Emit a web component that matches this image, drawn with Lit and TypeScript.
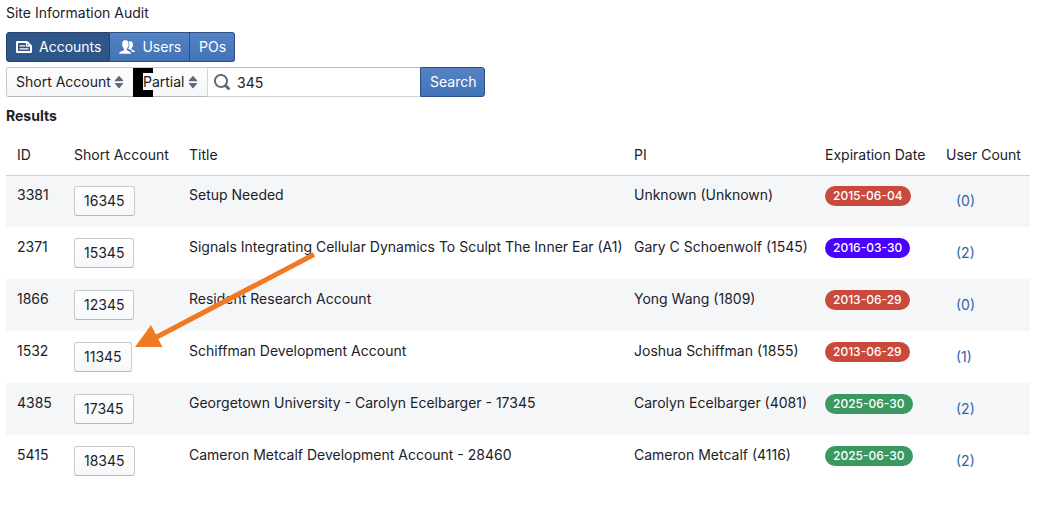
import { LitElement, html, css, svg } from "lit";
import { customElement, state } from "lit/decorators.js";
import { classMap } from "lit/directives/class-map.js";

type Status = "expired" | "closing" | "active";

interface Account {
  id: number;
  short: string;
  title: string;
  pi: string;
  expires: string;
  status: Status;
  users: number;
}

const ACCOUNTS: Account[] = [
  { id: 3381, short: "16345", title: "Setup Needed", pi: "Unknown (Unknown)", expires: "2015-06-04", status: "expired", users: 0 },
  { id: 2371, short: "15345", title: "Signals Integrating Cellular Dynamics To Sculpt The Inner Ear (A1)", pi: "Gary C Schoenwolf (1545)", expires: "2016-03-30", status: "closing", users: 2 },
  { id: 1866, short: "12345", title: "Resident Research Account", pi: "Yong Wang (1809)", expires: "2013-06-29", status: "expired", users: 0 },
  { id: 1532, short: "11345", title: "Schiffman Development Account", pi: "Joshua Schiffman (1855)", expires: "2013-06-29", status: "expired", users: 1 },
  { id: 4385, short: "17345", title: "Georgetown University - Carolyn Ecelbarger - 17345", pi: "Carolyn Ecelbarger (4081)", expires: "2025-06-30", status: "active", users: 2 },
  { id: 5415, short: "18345", title: "Cameron Metcalf Development Account - 28460", pi: "Cameron Metcalf (4116)", expires: "2025-06-30", status: "active", users: 2 },
];

const accountsIcon = svg`<path fill="none" stroke="currentColor" stroke-width="2" stroke-linejoin="round" d="M1 3h10l4 4v6H1z"/><path fill="none" stroke="currentColor" stroke-width="1.300" d="M10.500 3v4H15M3.500 6.800H9M3.500 9.900h9"/>`;
const usersIcon = svg`<path fill="currentColor" d="M15.900 13c-.1-.5-.2-1-.9-1.400-.7-.3-2.300-.8-2.500-1.300s-.1-.9-.1-.9.700-.7.900-1.700c.5-.1.700-.9.700-1.400s-.3-.8-.3-.8c.2-.8.1-1.800-.4-2.400-.5-.6-1.200-.8-2-.8-.6 0-1.200.2-1.700.5.600.9.800 2 .6 3.200.3.600.1 1.700-.4 2.300-.2.500-.4.900-.7 1.200.5.600 2.400 1 3.200 1.700.6.500.7 1.800.7 1.800z"/><path fill="currentColor" d="M12 14.800s-.1-1.500-.9-2c-.7-.5-2.900-1-3.200-1.800-.2-.5-.1-1-.1-1s.9-1 1.100-2.200c.5-.2.800-1 .8-1.500 0-.6-.3-1-.3-1 .2-1.100.1-2.200-.4-2.900-.6-.8-1.500-1.100-2.600-1.100s-2 .3-2.600 1.100c-.5.700-.6 1.800-.4 2.900 0 0-.3.400-.3 1 .1.500.3 1.300.8 1.500.2 1.200 1.100 2.200 1.100 2.200s.1.500-.1 1c-.3.800-2.900 1.300-3.700 1.800-.9.500-1.200 2-1.200 2z"/>`;
const searchIcon = svg`<path fill="currentColor" fill-rule="evenodd" d="M15.550 13.430l-2.670-2.680a6.940 6.940 0 001.110-3.760c0-3.870-3.130-7-7-7s-7 3.130-7 7 3.130 7 7 7c1.390 0 2.680-.42 3.760-1.110l2.680 2.670a1.498 1.498 0 102.120-2.120zm-8.560-1.440c-2.760 0-5-2.240-5-5s2.240-5 5-5 5 2.240 5 5-2.240 5-5 5z"/>`;
const caretIcon = svg`<path fill="currentColor" d="M4.400 7.200h7.200a.5.500 0 00.400-.85l-3.500-4.200a.65.650 0 00-1 0L4 6.350a.5.500 0 00.4.85zM11.600 8.900H4.400a.5.500 0 00-.4.850l3.500 4.200a.65.650 0 001 0l3.500-4.200a.5.500 0 00-.4-.85z"/>`;

const icon = (shape: unknown) =>
  html`<svg class="icon" viewBox="0 0 16 16" aria-hidden="true">${shape}</svg>`;

@customElement("app-root")
export class AppRoot extends LitElement {
  @state() private tab = "Accounts";

  static styles = css`
    :host {
      display: block;
      box-sizing: border-box;
      padding: 4px 24px 24px 6px;
      color: #1c2127;
      font: 14px/18px Inter, sans-serif;
    }
    *,
    *::after {
      box-sizing: border-box;
    }
    h1,
    h2 {
      margin: 0 0 10px;
      font-size: 14px;
      line-height: 18px;
      font-weight: 400;
    }
    h2 {
      font-weight: 700;
    }
    button,
    input,
    select {
      margin: 0;
      height: 30px;
      color: inherit;
      font: inherit;
    }
    .icon {
      display: block;
      flex: none;
      width: 16px;
      height: 16px;
    }
    .tabs,
    .search {
      display: flex;
    }
    .tabs {
      margin-bottom: 5px;
    }
    .search {
      margin-bottom: 10px;
    }
    .primary {
      display: flex;
      align-items: center;
      gap: 7px;
      padding: 0 8px 0 9px;
      border: 1px solid #2c5083;
      background: linear-gradient(#5583c3, #4272b8);
      color: #fff;
    }
    .tabs .primary + .primary {
      border-left: 0;
    }
    .tabs .primary:first-child {
      border-radius: 3px 0 0 3px;
    }
    .primary:last-child {
      border-radius: 0 3px 3px 0;
    }
    .primary.selected {
      border-color: #24436f;
      background: #2f5688;
    }
    .picker {
      position: relative;
      margin-right: -1px;
    }
    .picker select {
      display: block;
      padding: 0 22px 0 9px;
      border: 1px solid #c8cacd;
      border-bottom-color: #b4b7bb;
      border-radius: 0;
      background: linear-gradient(#fdfdfe, #f5f7f9);
      appearance: none;
    }
    .picker:first-child select {
      border-radius: 3px 0 0 3px;
    }
    .picker .icon {
      position: absolute;
      top: 7px;
      right: 7px;
      color: #5f6b7c;
      pointer-events: none;
    }
    .marked::after {
      content: "";
      position: absolute;
      top: 1px;
      left: 0;
      width: 20px;
      height: 29px;
      border: solid #000;
      border-width: 5px 0 7px 10px;
      pointer-events: none;
    }
    .query {
      position: relative;
      width: 213px;
    }
    .query .icon {
      position: absolute;
      top: 7px;
      left: 7px;
      color: #5f6b7c;
      pointer-events: none;
    }
    .query input {
      display: block;
      width: 100%;
      padding: 0 10px 0 29px;
      border: 1px solid #d3d4d6;
      border-top-color: #b9babc;
      border-right: 0;
      border-radius: 0;
      background: #fff;
    }
    .results {
      position: relative;
    }
    table {
      width: 100%;
      border-spacing: 0;
      table-layout: fixed;
    }
    th,
    td {
      padding: 11px 0 11px 11px;
      text-align: left;
      vertical-align: top;
      font-weight: 400;
      white-space: nowrap;
    }
    .c-id {
      width: 57px;
    }
    .c-short {
      width: 115px;
    }
    .c-pi {
      width: 191px;
    }
    .c-date {
      width: 121px;
    }
    .c-users {
      width: 95px;
    }
    tbody tr:nth-child(odd) td {
      background: #f5f6f8;
    }
    tbody tr:first-child td {
      box-shadow: inset 0 1px 0 #d0d2d5;
    }
    .code {
      display: block;
      padding: 0 9px;
      border: 1px solid #c8cacd;
      border-bottom-color: #b4b7bb;
      border-radius: 3px;
      background: linear-gradient(#fff, #f6f7f9);
    }
    .tag {
      display: block;
      width: fit-content;
      padding: 2px 8px;
      border-radius: 10px;
      color: #fff;
      font-size: 12px;
      line-height: 16px;
      font-weight: 500;
    }
    .expired {
      background: #c9493c;
    }
    .closing {
      background: #4a00ff;
    }
    .active {
      background: #3a9860;
    }
    .count {
      display: block;
      width: fit-content;
      padding: 6px 10px;
      color: #3163a9;
      text-decoration: none;
    }
    .arrow {
      position: absolute;
      top: 115px;
      left: 129px;
      width: 184px;
      height: 100px;
      pointer-events: none;
    }
  `;

  private tabButton(name: string, shape?: unknown) {
    return html`<button
      type="button"
      class=${classMap({ primary: true, selected: this.tab === name })}
      aria-pressed=${this.tab === name}
      @click=${() => (this.tab = name)}
    >${shape ? icon(shape) : ""}<span>${name}</span></button>`;
  }

  render() {
    return html`
      <h1>Site Information Audit</h1>
      <div class="tabs">
        ${this.tabButton("Accounts", accountsIcon)}
        ${this.tabButton("Users", usersIcon)}
        ${this.tabButton("POs")}
      </div>
      <form class="search" @submit=${(e: Event) => e.preventDefault()}>
        <label class="picker">
          <select aria-label="Search field"><option>Short Account</option></select>
          ${icon(caretIcon)}
        </label>
        <label class="picker marked">
          <select aria-label="Match type"><option>Partial</option></select>
          ${icon(caretIcon)}
        </label>
        <label class="query">
          ${icon(searchIcon)}
          <input type="text" aria-label="Search text" .value=${"345"} />
        </label>
        <button type="submit" class="primary">Search</button>
      </form>
      <h2>Results</h2>
      <div class="results">
        <table>
          <thead>
            <tr>
              <th class="c-id">ID</th>
              <th class="c-short">Short Account</th>
              <th>Title</th>
              <th class="c-pi">PI</th>
              <th class="c-date">Expiration Date</th>
              <th class="c-users">User Count</th>
            </tr>
          </thead>
          <tbody>
            ${ACCOUNTS.map(
              (a) => html`<tr>
                <td>${a.id}</td>
                <td><button type="button" class="code">${a.short}</button></td>
                <td>${a.title}</td>
                <td>${a.pi}</td>
                <td><span class="tag ${a.status}">${a.expires}</span></td>
                <td><a class="count" href="#users-${a.id}">(${a.users})</a></td>
              </tr>`
            )}
          </tbody>
        </table>
        <svg class="arrow" viewBox="0 0 184 100" aria-hidden="true">
          <path d="M179 4.500L18 89" fill="none" stroke="#f07a23" stroke-width="5" />
          <path d="M0 97L16 75L27.500 97z" fill="#f07a23" />
        </svg>
      </div>
    `;
  }
}
